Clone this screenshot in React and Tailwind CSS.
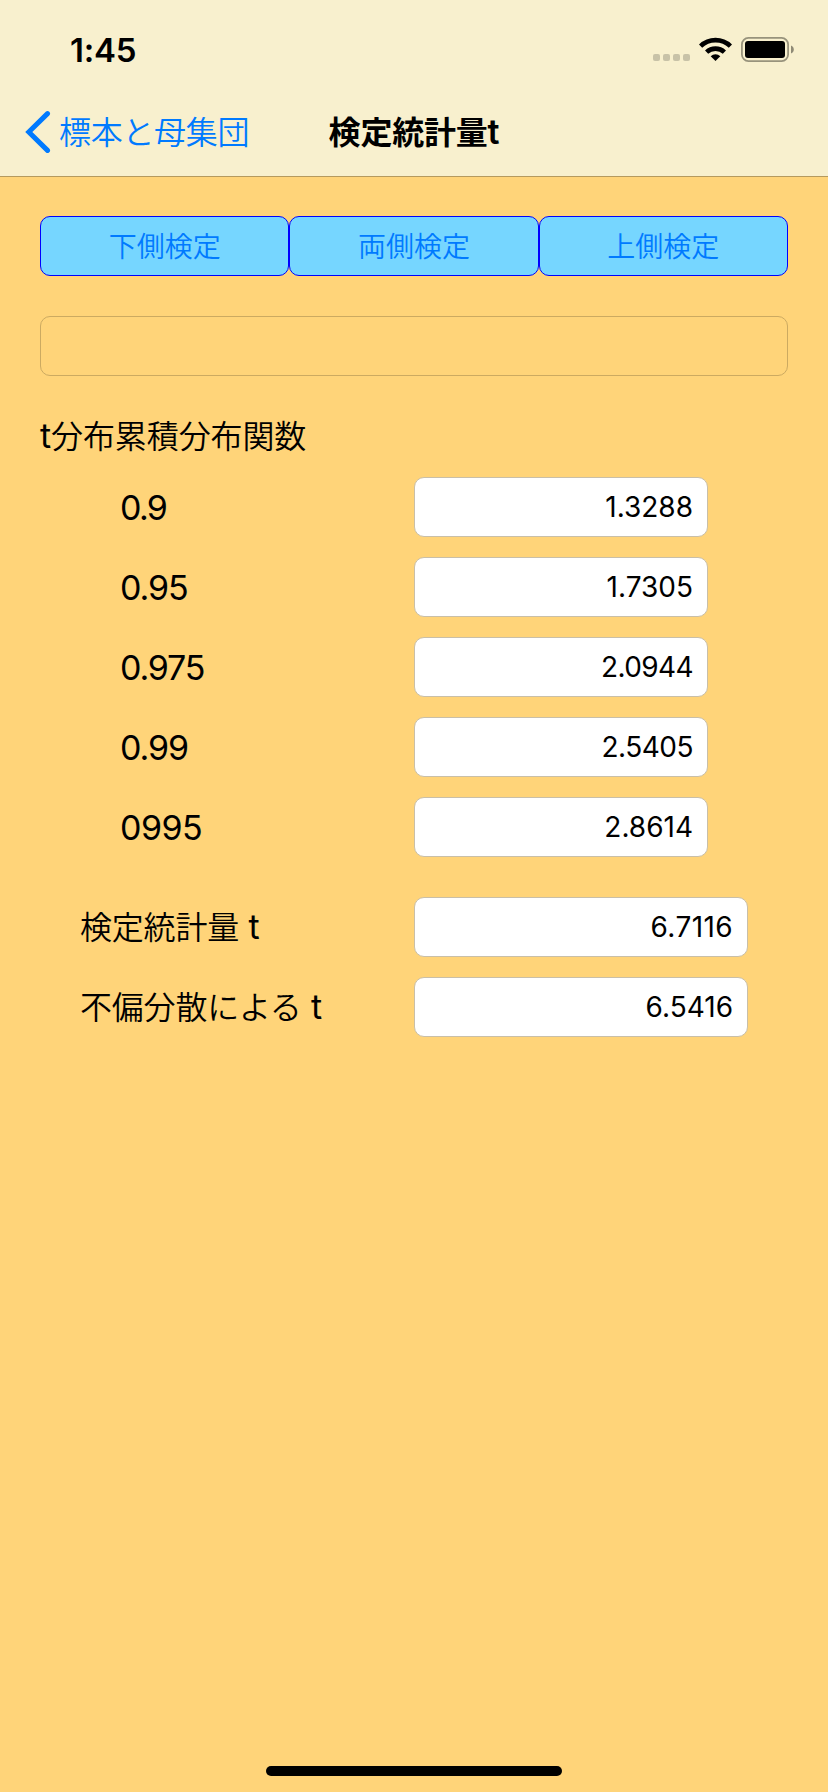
import React from 'react';

const tests = ['下側検定', '両側検定', '上側検定'];

const quantiles = [
  { label: '0.9', value: '1.3288', labelTracking: 'tracking-[-1.7px]', valueTracking: 'tracking-normal' },
  { label: '0.95', value: '1.7305', labelTracking: 'tracking-[-1.1px]', valueTracking: 'tracking-normal' },
  { label: '0.975', value: '2.0944', labelTracking: 'tracking-[-1.2px]', valueTracking: 'tracking-[-0.6px]' },
  { label: '0.99', value: '2.5405', labelTracking: 'tracking-[-1.1px]', valueTracking: 'tracking-[-0.5px]' },
  { label: '0995', value: '2.8614', labelTracking: 'tracking-[-0.5px]', valueTracking: 'tracking-normal' },
];

const statistics = [
  { label: '検定統計量', value: '6.7116', valueTracking: 'tracking-[0.4px]' },
  { label: '不偏分散による', value: '6.5416', valueTracking: 'tracking-normal' },
];

const StatusBar = () => (
  <div className="h-[88px] flex items-start justify-between pl-[70px] pr-[34px]">
    <span className="mt-[31px] text-[33px] leading-[38px] font-semibold tracking-[-0.2px]">1:45</span>

    <div className="mt-[37px] h-[25px] flex">
      <div className="flex gap-[3px] mt-[17px]">
        {[0, 1, 2, 3].map((dot) => (
          <span key={dot} className="w-[7px] h-[7px] rounded-[2px] bg-[#c8c2a7]" />
        ))}
      </div>
      <svg className="ml-[9px]" width="33" height="24" viewBox="0 0 33 24" fill="none">
        <path d="M1.6 9.2a21.4 21.4 0 0 1 29.8 0" stroke="#000" strokeWidth="4.6" />
        <path d="M7.6 15.2a12.9 12.9 0 0 1 17.8 0" stroke="#000" strokeWidth="4.6" />
        <path d="M16.5 24l-4.8-4.8a7 7 0 0 1 9.6 0z" fill="#000" />
      </svg>
      <svg className="ml-[9px]" width="53" height="25" viewBox="0 0 53 25">
        <rect x="0.9" y="0.9" width="46.2" height="23.2" rx="6.5" fill="none" stroke="#98937c" strokeWidth="1.8" />
        <rect x="4" y="4" width="40" height="17" rx="3" fill="#000" />
        <path d="M50 8.5c1.8.7 2.8 2.2 2.8 4s-1 3.3-2.8 4z" fill="#8f8a75" />
      </svg>
    </div>
  </div>
);

const NavBar = () => (
  <div className="h-[88px] grid grid-cols-[1fr_auto_1fr] items-center">
    <button className="flex items-center pl-[25px] text-[#007aff]">
      <svg width="26" height="44" viewBox="0 0 26 44" fill="none">
        <path d="M22.5 3.6L3.8 22l18.7 18.4" stroke="currentColor" strokeWidth="5" strokeLinecap="round" strokeLinejoin="miter" />
      </svg>
      <span className="ml-2 pt-[2px] text-[32px] leading-[44px] font-[350] tracking-[-0.3px]">標本と母集団</span>
    </button>
    <h1 className="text-[32px] leading-[44px] font-bold tracking-[-0.2px]">
      検定統計量<span className="text-[34px] font-semibold">t</span>
    </h1>
  </div>
);

const ValueField = ({ value, className }) => (
  <div className={`h-[60px] flex items-center justify-end pr-[14px] bg-white border border-[#c9bfa8] rounded-[10px] text-[28px] ${className}`}>
    {value}
  </div>
);

const App = () => {
  return (
    <div className="h-[1792px] w-[828px] flex flex-col bg-[#ffd479] text-black font-['Inter','Noto_Sans_CJK_JP',sans-serif]">
      <header className="h-[177px] bg-[#f8f0ce] border-b border-[#b59a5e]">
        <StatusBar />
        <NavBar />
      </header>

      <main className="flex-1 px-10 pt-[39px]">
        <div className="grid grid-cols-3">
          {tests.map((name) => (
            <button
              key={name}
              className="h-[60px] pt-[2px] flex items-center justify-center bg-[#76d6ff] border border-[#0000ff] rounded-[10px] text-[28px] font-[350] text-[#007aff]"
            >
              {name}
            </button>
          ))}
        </div>

        <div className="mt-10 h-[60px] border border-[#ccaa61] rounded-[10px]" />

        <h2 className="mt-[38px] h-11 text-[32px] leading-[44px] font-[350] tracking-[-0.1px]">
          <span className="text-[34px] font-normal">t</span>分布累積分布関数
        </h2>

        <div className="mt-[19px] flex flex-col gap-5">
          {quantiles.map(({ label, value, labelTracking, valueTracking }) => (
            <div key={label} className="flex items-center pl-20">
              <span className={`w-[294px] text-[34px] ${labelTracking}`}>{label}</span>
              <ValueField value={value} className={`w-[294px] ${valueTracking}`} />
            </div>
          ))}
        </div>

        <div className="mt-10 flex flex-col gap-5">
          {statistics.map(({ label, value, valueTracking }) => (
            <div key={label} className="flex items-center pl-10">
              <span className="w-[334px] pt-px text-[32px] leading-[44px] font-[350] tracking-[-0.2px]">
                {label}
                <span className="text-[34px] font-normal"> t</span>
              </span>
              <ValueField value={value} className={`w-[334px] ${valueTracking}`} />
            </div>
          ))}
        </div>
      </main>

      {/* Home indicator */}
      <div className="mb-4 h-[10px] w-[296px] self-center rounded-full bg-black" />
    </div>
  );
};

export default App;
